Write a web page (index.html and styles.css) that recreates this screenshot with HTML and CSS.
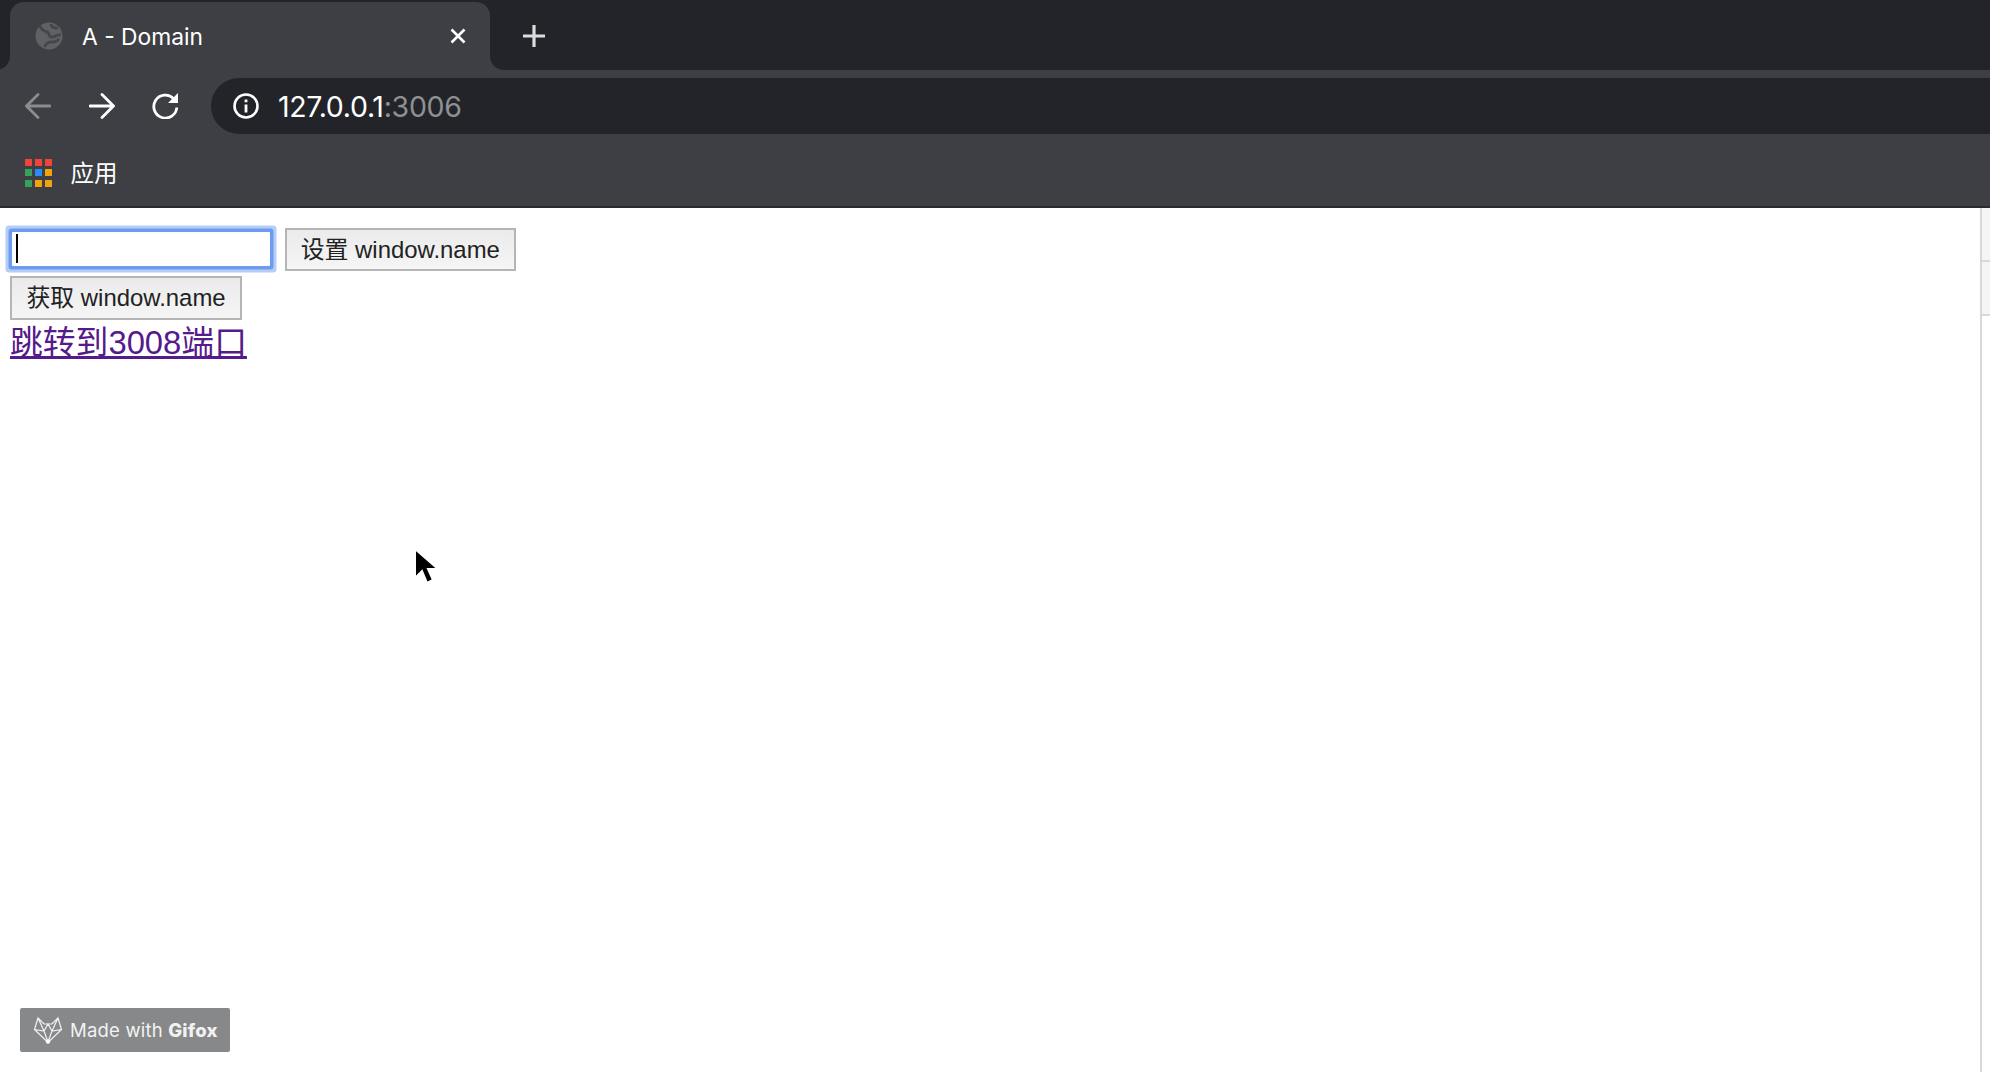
FILE: index.html
```html
<!DOCTYPE html>
<html lang="zh">
<head>
<meta charset="utf-8">
<title>A - Domain</title>
<link rel="stylesheet" href="styles.css">
</head>
<body>
<header class="chrome">
  <div class="tabstrip">
    <div class="tab">
      <svg class="globe" width="28" height="28" viewBox="0 0 28 28"><circle cx="14" cy="14" r="13.5" fill="#606165"/><path d="M5 4c1 4 4 5 7 6s1 4 4 5 6-3 10-2M10 25c0-3 3-5 6-5s6 0 8-3M16 2c0 3 3 4 7 4" stroke="#45464a" stroke-width="3" fill="none"/></svg>
      <span class="tab-title">A - Domain</span>
      <svg class="tab-close" width="18" height="18" viewBox="0 0 18 18"><path d="M2.500 2.500l13 13M15.500 2.500l-13 13" stroke="#fff" stroke-width="2.600" fill="none"/></svg>
    </div>
    <svg class="newtab" width="24" height="24" viewBox="0 0 24 24"><path d="M12 1v22M1 12h22" stroke="#dcdcdd" stroke-width="3.200" fill="none"/></svg>
  </div>
  <div class="toolbar">
    <svg class="nav nav-back" width="26" height="26" viewBox="0 0 26 26"><path d="M25 13H2M13 1.500L1.500 13 13 24.500" stroke="#8b8c8e" stroke-width="2.800" fill="none" stroke-linecap="round"/></svg>
    <svg class="nav nav-fwd" width="26" height="26" viewBox="0 0 26 26"><path d="M1 13h23M13 1.500L24.500 13 13 24.500" stroke="#fff" stroke-width="2.800" fill="none" stroke-linecap="round"/></svg>
    <svg class="nav nav-reload" width="27" height="27" viewBox="0 0 27 27"><path d="M21.500 6.500A11.500 11.500 0 1 0 24.800 15.500" stroke="#fff" stroke-width="2.800" fill="none"/><path d="M26 1v10H16z" fill="#fff"/></svg>
    <div class="omnibox">
      <svg class="info" width="26" height="26" viewBox="0 0 26 26"><circle cx="13" cy="13" r="11.500" stroke="#fff" stroke-width="2.600" fill="none"/><path d="M11.600 6.500h2.800v2.800h-2.800zM11.600 11.500h2.800v8h-2.800z" fill="#fff"/></svg>
      <span class="url">127.0.0.1<span class="url-dim">:3006</span></span>
    </div>
  </div>
  <div class="bookmarks">
    <div class="apps">
      <i class="r"></i><i class="r"></i><i class="r"></i>
      <i class="g"></i><i class="b"></i><i class="y"></i>
      <i class="g"></i><i class="y"></i><i class="y"></i>
    </div>
    <span class="apps-label">应用</span>
  </div>
</header>
<div class="viewport">
  <main class="page">
    <div class="row">
      <span class="field"><input class="text-input" type="text" aria-label="window.name"><span class="caret"></span></span>
      <button class="btn btn-set" type="button">设置 window.name</button>
    </div>
    <div class="row row-second">
      <button class="btn btn-get" type="button">获取 window.name</button>
    </div>
    <a class="link" href="#">跳转到3008端口</a>
  </main>
  <aside class="sidebar"><div class="seg"></div><div class="seg"></div></aside>
  <svg class="cursor" width="26" height="40" viewBox="0 0 26 40"><path d="M2 2v29l7-7 5 12 6-3-5-11h10z" fill="#000" stroke="#fff" stroke-width="2"/></svg>
  <div class="badge">
    <svg class="fox" width="30" height="28" viewBox="0 0 30 28"><path d="M1.500 13.500L5 2l6 6h8l6-6 3.500 11.500L15 26.500zM5 2l6 13 4 11 4-11 6-13M1.500 13.500L11 15l4-7 4 7 9.500-1.500" stroke="#f2f2f2" stroke-width="1.200" fill="none"/><circle cx="15" cy="25.500" r="2.200" fill="#fff"/></svg>
    <span class="badge-text">Made with <b>Gifox</b></span>
  </div>
</div>
</body>
</html>
```
FILE: styles.css
```css
* { box-sizing: border-box; }
html, body { margin: 0; height: 100%; overflow: hidden; background: #fff; }
body { display: flex; flex-direction: column; font-family: "Liberation Sans", "Noto Sans CJK SC", sans-serif; }

.chrome { flex: none; background: #3d3f44; color: #fff; font-family: Inter, "Noto Sans CJK SC", sans-serif; }

.tabstrip { height: 70px; background: #222429; display: flex; align-items: flex-end; padding-left: 10px; }
.tab { position: relative; flex: none; width: 480px; height: 68px; background: #3d3f44; border-radius: 14px 14px 0 0; display: flex; align-items: center; padding: 0 0 0 25px; }
.tab::before, .tab::after { content: ""; position: absolute; bottom: 0; height: 14px; background: radial-gradient(circle at var(--cx) 0, #222429 13.500px, #3d3f44 14.500px); }
.tab::before { left: -10px; width: 10px; --cx: -4px; }
.tab::after { right: -14px; width: 14px; --cx: 14px; }
.globe { flex: none; }
.tab-title { margin-left: 19px; font-size: 22.800px; white-space: nowrap; flex: 1; }
.tab-close { flex: none; margin-right: 23px; }
.newtab { flex: none; margin: 0 0 22px 32px; }

.toolbar { height: 64px; padding-top: 8px; display: flex; align-items: center; }
.nav { flex: none; }
.nav-back { margin-left: 25px; }
.nav-fwd { margin-left: 38px; }
.nav-reload { margin: 0 0 2px 37px; }
.omnibox { flex: 1; height: 56px; margin-left: 32px; background: #222429; border-radius: 28px 0 0 28px; display: flex; align-items: center; padding-left: 22px; }
.info { flex: none; }
.url { margin-left: 19px; font-size: 28.500px; letter-spacing: -0.300px; white-space: nowrap; }
.url-dim { color: #8f9093; }

.bookmarks { height: 74px; padding: 5px 0 0 25px; display: flex; align-items: center; border-bottom: 2px solid #2a2b2d; }
.apps { display: grid; grid-template-columns: repeat(3, 6.500px); grid-auto-rows: 7px; column-gap: 3.500px; row-gap: 3.500px; }
.apps i { display: block; }
.apps .r { background: #f04438; }
.apps .g { background: #34a35a; }
.apps .b { background: #2a8cf0; }
.apps .y { background: #f0a30a; }
.apps-label { margin: 0 0 1px 19px; font-size: 23.500px; }

.viewport { position: relative; flex: 1; display: flex; min-height: 0; }
.page { flex: 1; padding: 20px 10px 0; }
.row { display: flex; align-items: flex-start; height: 48px; }
.row-second { height: 44px; }
.field { position: relative; display: block; flex: none; width: 258px; height: 34px; margin: 4px 0 0 2px; }
.text-input { display: block; width: 100%; height: 100%; margin: 0; padding: 0; border: 0; background: #fff; outline: none; box-shadow: 0 0 0 3.500px #6b9cf2, 0 0 0 6.500px #b6cdf6; border-radius: 1px; caret-color: transparent; }
.caret { position: absolute; left: 4px; top: 2px; width: 2px; height: 29px; background: #000; }
.btn { display: block; flex: none; margin: 0; padding: 0 0 5px; font: 23.900px "Liberation Sans", "Noto Sans CJK SC", sans-serif; color: #222; background: linear-gradient(#ebebeb, #f5f5f5); border: 2.500px solid #b5b5b5; border-radius: 0; white-space: nowrap; }
.btn-set { width: 231.500px; height: 43px; margin-left: 14.500px; }
.btn-get { width: 232px; height: 44px; }
.link { display: inline-block; font-size: 32.800px; line-height: 46px; color: #551a8b; text-decoration: underline; }

.sidebar { flex: none; width: 10px; border-left: 2px solid #d8d8d8; display: flex; flex-direction: column; align-items: stretch; }
.seg { height: 54px; background: #f5f5f5; border-bottom: 2px solid #d8d8d8; }

.cursor { position: absolute; left: 413px; top: 339px; }
.badge { position: absolute; left: 20px; top: 800px; width: 210px; height: 44px; background: #87888a; border-radius: 2px; display: flex; align-items: center; padding-left: 13px; color: #f2f2f2; }
.fox { flex: none; }
.badge-text { margin-left: 7px; font: 18.500px Inter, sans-serif; letter-spacing: 0.200px; white-space: nowrap; }
.badge-text b { font-weight: 800; }
```
